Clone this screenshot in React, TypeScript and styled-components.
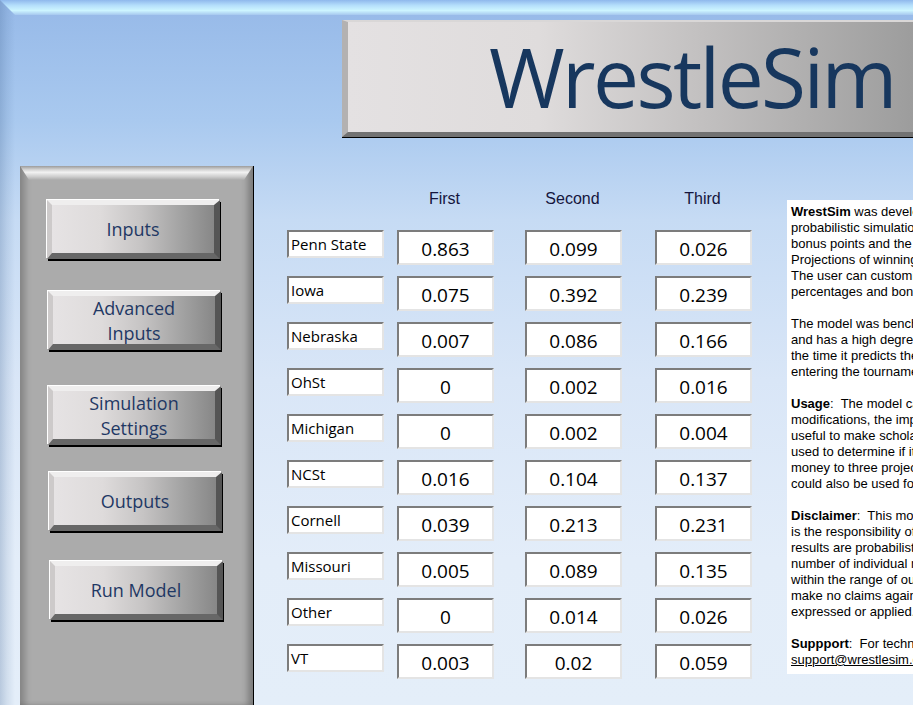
import React from 'react';
import styled, {createGlobalStyle} from 'styled-components';

const GlobalStyle = createGlobalStyle`
  html, body {
    margin: 0;
    padding: 0;
    overflow: hidden;
  }
`

type Row = {
    team: string
    first: string
    second: string
    third: string
}

const rows: Row[] = [
    {team: 'Penn State', first: '0.863', second: '0.099', third: '0.026'},
    {team: 'Iowa', first: '0.075', second: '0.392', third: '0.239'},
    {team: 'Nebraska', first: '0.007', second: '0.086', third: '0.166'},
    {team: 'OhSt', first: '0', second: '0.002', third: '0.016'},
    {team: 'Michigan', first: '0', second: '0.002', third: '0.004'},
    {team: 'NCSt', first: '0.016', second: '0.104', third: '0.137'},
    {team: 'Cornell', first: '0.039', second: '0.213', third: '0.231'},
    {team: 'Missouri', first: '0.005', second: '0.089', third: '0.135'},
    {team: 'Other', first: '0', second: '0.014', third: '0.026'},
    {team: 'VT', first: '0.003', second: '0.02', third: '0.059'},
]

// label, gap above, left nudge
const buttons: [string[], number, number][] = [
    [['Inputs'], 34, 0],
    [['Advanced', 'Inputs'], 32, 1],
    [['Simulation', 'Settings'], 36, 1],
    [['Outputs'], 27, 2],
    [['Run Model'], 30, 3],
]

export default function App() {
    return (
        <>
            <GlobalStyle/>
            <Screen>
                <TopBand/>
                <Body>
                    <TitleBox>WrestleSim</TitleBox>
                    <MainRow>
                        <Sidebar>
                            {buttons.map(([label, top, left]) => (
                                <NavButton key={label.join(' ')} $top={top} $left={left}>
                                    {label.map((l, i) => <span key={i}>{l}</span>)}
                                </NavButton>
                            ))}
                        </Sidebar>
                        <Table>
                            <span/>
                            <HeadCell>First</HeadCell>
                            <HeadCell>Second</HeadCell>
                            <HeadCell>Third</HeadCell>
                            {rows.map(r => (
                                <React.Fragment key={r.team}>
                                    <NameCell>{r.team}</NameCell>
                                    <ValueCell>{r.first}</ValueCell>
                                    <ValueCell>{r.second}</ValueCell>
                                    <ValueCell>{r.third}</ValueCell>
                                </React.Fragment>
                            ))}
                        </Table>
                        <InfoPanel>
                            <Line><b>WrestSim</b> was developed to provide a</Line>
                            <Line>probabilistic simulation of the NCAA tournament, including</Line>
                            <Line>bonus points and the resulting team scores.</Line>
                            <Line>Projections of winning the team title are provided.</Line>
                            <Line>The user can customize the inputs, including win</Line>
                            <Line>percentages and bonus point rates.</Line>
                            <Line/>
                            <Line>The model was benchmarked against past tournaments</Line>
                            <Line>and has a high degree of accuracy. Approximately 80% of</Line>
                            <Line>the time it predicts the team champion from seeds</Line>
                            <Line>entering the tournament.</Line>
                            <Line/>
                            <Line><b>Usage</b>:  The model can be used as is or, with some</Line>
                            <Line>modifications, the impact of changes can be evaluated. It is</Line>
                            <Line>useful to make scholarship decisions. It could also be</Line>
                            <Line>used to determine if it is worthwhile to allocate</Line>
                            <Line>money to three projected All-Americans. It</Line>
                            <Line>could also be used for fun.</Line>
                            <Line/>
                            <Line><b>Disclaimer</b>:  This model is for informational purposes. It</Line>
                            <Line>is the responsibility of the user to verify inputs. The</Line>
                            <Line>results are probabilistic, and are based on a large</Line>
                            <Line>number of individual match simulations. Actual results fall</Line>
                            <Line>within the range of outcomes predicted by the model. We</Line>
                            <Line>make no claims against any results, either</Line>
                            <Line>expressed or applied.</Line>
                            <Line/>
                            <Line><b>Suppport</b>:  For technical support, contact</Line>
                            <Line><Mail href="mailto:support@wrestlesim.com">support@wrestlesim.com</Mail></Line>
                        </InfoPanel>
                    </MainRow>
                </Body>
            </Screen>
        </>
    );
}

const Screen = styled.div`
  width: 913px;
  height: 705px;
  overflow: hidden;
  display: flex;
  flex-direction: column;
  background: linear-gradient(to right, rgba(70, 105, 150, 0.28) 0, rgba(70, 105, 150, 0.12) 7px, rgba(70, 105, 150, 0) 15px),
  linear-gradient(to bottom, #96b9e8 0px, #a9c9ef 120px, #c6dbf4 220px, #d9e6f7 380px, #e3edf9 560px, #e4eef9 705px);
`
const TopBand = styled.div`
  flex: none;
  height: 15px;
  background: linear-gradient(to bottom, #8fb8ec 0%, #b4defb 35%, #cdf5ff 70%, #a6c8ef 100%);
  clip-path: polygon(0 0, 100% 0, 100% 100%, 15px 100%);
`
const Body = styled.div`
  flex: 1;
  min-height: 0;
  display: flex;
  flex-direction: column;
  padding-top: 5px;
`
const TitleBox = styled.div`
  flex: none;
  box-sizing: border-box;
  margin-left: 342px;
  width: 640px;
  height: 117px;
  border-style: solid;
  border-width: 2px 0 5px 6px;
  border-color: #d9d7d7 transparent #727272 #b3b1b1;
  box-shadow: 0 1px 0 #000;
  background: linear-gradient(to right, #e4e1e2 0%, #dfdcdc 30%, #c3c1c1 55%, #9f9f9f 87%, #8f8f8f 100%);
  padding: 13px 0 0 141px;
  font-family: "Open Sans", sans-serif;
  font-size: 82px;
  line-height: 82px;
  letter-spacing: -2.6px;
  color: #17375e;
`
const MainRow = styled.div`
  flex: 1;
  min-height: 0;
  display: flex;
  margin-top: 29px;
  padding-left: 20px;
`
const Sidebar = styled.div`
  position: relative;
  flex: none;
  width: 234px;
  box-sizing: border-box;
  display: flex;
  flex-direction: column;
  align-items: flex-start;
  padding-left: 27px;
  background: #ababab;
  border-right: 1px solid #000;
  box-shadow: inset 8px 0 6px -3px rgba(0, 0, 0, 0.22), inset -7px 0 6px -2px rgba(0, 0, 0, 0.28);

  &::before {
    content: "";
    position: absolute;
    left: 0;
    right: 0;
    top: 0;
    height: 14px;
    background: linear-gradient(to bottom, #9c9c9c 0%, #d2d2d2 25%, #f2f2f2 45%, #cfcfcf 75%, #ababab 100%);
    clip-path: polygon(0 0, 100% 0, calc(100% - 9px) 100%, 9px 100%);
  }
`
const NavButton = styled.button<{ $top: number, $left: number }>`
  margin-top: ${p => p.$top}px;
  margin-left: ${p => p.$left}px;
  width: 173px;
  height: 59px;
  box-sizing: border-box;
  padding: 1px 0 0;
  display: flex;
  flex-direction: column;
  align-items: center;
  justify-content: center;
  border-style: solid;
  border-width: 5px 6px 6px 5px;
  border-color: #efeeee #555555 #676767 #cdcaca;
  box-shadow: -1px -1px 0 #fff, 1px 2px 0 #000;
  background: linear-gradient(to right, #e6e3e4 0%, #dedbdb 30%, #c6c4c4 55%, #a2a2a2 80%, #878787 100%);
  font-family: "Open Sans", sans-serif;
  font-size: 18px;
  line-height: 25px;
  color: #1f3864;
  cursor: pointer;
`
const Table = styled.div`
  flex: none;
  display: grid;
  grid-template-columns: 110px 128px 130px 97px;
  grid-template-rows: 29px;
  grid-auto-rows: 35px;
  row-gap: 11px;
  margin-left: 33px;
  padding-top: 24px;
  align-content: start;
`
const HeadCell = styled.div`
  width: 95px;
  text-align: center;
  font-family: "Liberation Sans", Arial, sans-serif;
  font-size: 16px;
  line-height: 18px;
  color: #15153d;
`
const Cell = styled.div`
  width: 97px;
  box-sizing: border-box;
  background: #fff;
  border-style: solid;
  border-width: 2px;
  border-color: #7c7c7c #e4e4e4 #e4e4e4 #7c7c7c;
  font-family: "Open Sans", sans-serif;
  color: #000;
  white-space: nowrap;
  overflow: hidden;
`
const NameCell = styled(Cell)`
  height: 28px;
  padding: 3px 0 0 2px;
  font-size: 15px;
  line-height: 18px;
`
const ValueCell = styled(Cell)`
  height: 35px;
  padding-top: 8px;
  text-align: center;
  font-size: 19px;
  line-height: 19px;
`
const InfoPanel = styled.div`
  flex: none;
  align-self: flex-start;
  width: 420px;
  margin: 34px 0 0 35px;
  padding: 4px 0 6px 4px;
  background: #fff;
  font-family: "Liberation Sans", Arial, sans-serif;
  font-size: 13px;
  line-height: 16px;
  color: #000;
`
const Line = styled.div`
  height: 16px;
  white-space: pre;
`
const Mail = styled.a`
  color: #000;
  text-decoration: underline;
`
